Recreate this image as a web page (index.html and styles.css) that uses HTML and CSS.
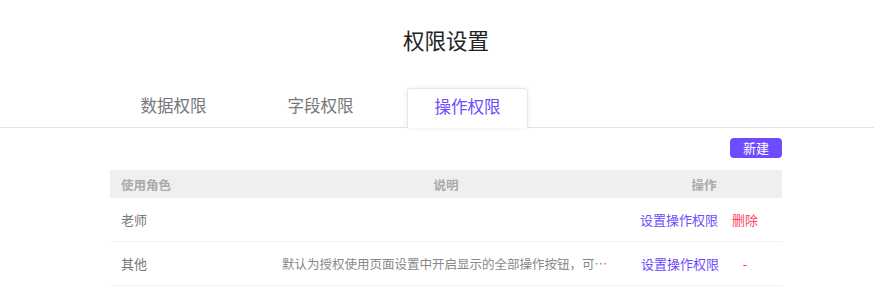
FILE: index.html
```html
<!DOCTYPE html>
<html lang="zh">
<head>
<meta charset="UTF-8">
<title>权限设置</title>
<link rel="stylesheet" href="styles.css">
</head>
<body>

<h1 class="title">权限设置</h1>

<div class="tabs">
  <div class="tab">数据权限</div>
  <div class="tab">字段权限</div>
  <div class="tab active">操作权限</div>
</div>

<div class="panel">
  <div class="toolbar"><button class="btn-new">新建</button></div>
  <table class="grid">
    <thead>
      <tr><th class="c-role">使用角色</th><th class="c-desc">说明</th><th class="c-ops">操作</th></tr>
    </thead>
    <tbody>
      <tr>
        <td class="c-role">老师</td>
        <td class="c-desc"></td>
        <td class="c-ops"><a class="link">设置操作权限</a><a class="link del">删除</a></td>
      </tr>
      <tr>
        <td class="c-role">其他</td>
        <td class="c-desc"><div class="ellipsis">默认为授权使用页面设置中开启显示的全部操作按钮，可修改操作权限</div></td>
        <td class="c-ops"><a class="link">设置操作权限</a><a class="link del dash">-</a></td>
      </tr>
    </tbody>
  </table>
</div>

</body>
</html>
```

FILE: styles.css
```css
body {
  margin: 0;
  font-family: "Noto Sans CJK SC", "Noto Sans", sans-serif;
  background: #fff;
  color: #333;
}
.title {
  margin: 0 0 0 110px;
  width: 672px;
  padding-top: 26px;
  height: 62px;
  box-sizing: border-box;
  text-align: center;
  font-size: 21.5px;
  font-weight: normal;
  color: #222;
  line-height: 28px;
}
.tabs {
  display: flex;
  gap: 26px;
  padding-left: 113px;
  margin-top: 26px;
  border-bottom: 1px solid #e2e2e6;
  height: 39px;
}
.tab {
  width: 121px;
  height: 40px;
  box-sizing: border-box;
  text-align: center;
  font-size: 16.5px;
  line-height: 35px;
  color: #777;
}
.tab.active {
  color: #6e4bff;
  background: #fff;
  border: 1px solid #e6e6ee;
  border-bottom: none;
  border-radius: 4px 4px 0 0;
  box-shadow: 0 0 4px rgba(120, 120, 160, 0.15);
  position: relative;
  z-index: 1;
}
.panel {
  margin-left: 110px;
  width: 672px;
}
.toolbar {
  display: flex;
  justify-content: flex-end;
  padding-top: 10px;
  height: 42px;
  box-sizing: border-box;
}
.btn-new {
  width: 52px;
  height: 20px;
  border: none;
  border-radius: 4px;
  background: #6e4bff;
  color: #fff;
  font-family: inherit;
  font-size: 13px;
  line-height: 20px;
  padding: 0;
}
.grid {
  width: 100%;
  border-collapse: collapse;
  table-layout: fixed;
  font-size: 13px;
}
.grid th {
  background: #efefef;
  color: #aaa;
  font-size: 12.5px;
  font-weight: bold;
  height: 28px;
  padding: 0;
}
.grid td {
  height: 43px;
  padding: 0;
  border-bottom: 1px solid #f1f1f1;
  color: #777;
}
.c-role { width: 149px; text-align: left; }
.grid .c-role { padding-left: 11px; }
.c-desc { width: 352px; text-align: center; }
.grid td.c-desc { text-align: left; padding-left: 12px; color: #888; font-size: 12.5px; }
.c-ops { text-align: center; }
.grid td.c-ops { padding-right: 6px; }
.grid th.c-ops { padding-right: 0; padding-left: 4px; }
.ellipsis {
  width: 332px;
  white-space: nowrap;
  overflow: hidden;
  text-overflow: ellipsis;
}
.link {
  color: #6e4bff;
  cursor: pointer;
}
.link.del {
  color: #ff4563;
  margin-left: 14px;
}
.link.dash {
  display: inline-block;
  width: 24px;
  margin-left: 14px;
  color: #ff2d55;
}
```
